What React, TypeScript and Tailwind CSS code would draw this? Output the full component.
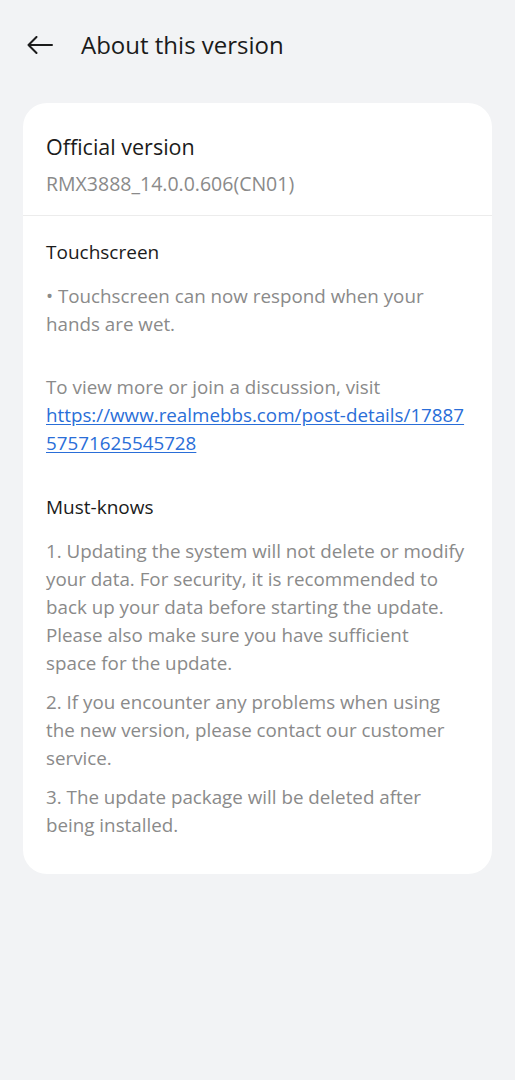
const mustKnows = [
  <>
    1. Updating the system will not delete or modify your data. For security, it is recommended to back up your
    data before starting the update. Please also make sure you have sufficient
    <br />
    space for the update.
  </>,
  '2. If you encounter any problems when using the new version, please contact our customer service.',
  '3. The update package will be deleted after being installed.',
]

function BackArrow() {
  return (
    <svg width="26" height="18" viewBox="0 0 26 18" fill="none" stroke="#1b1b1b" strokeWidth="2" strokeLinecap="round" strokeLinejoin="round">
      <path d="M25 9H1.5M9.5 1L1.5 9L9.5 17" />
    </svg>
  )
}

export default function App() {
  return (
    <div className="min-h-[1080px] w-full bg-[#f2f3f5] font-['Open_Sans',sans-serif]">
      {/* header */}
      <header className="flex h-[89px] items-center pl-[27px]">
        <BackArrow />
        <h1 className="ml-[28px] text-[24px] text-[#1b1b1b]">About this version</h1>
      </header>

      <main className="mx-[23px] mt-[14px] rounded-[24px] bg-white pb-[35px]">
        <div className="border-b border-[#ececec] px-[23px] pt-[28px] pb-[17px]">
          <p className="text-[21.5px] leading-[32px] text-[#1b1b1b]">Official version</p>
          <p className="mt-[7px] text-[19.5px] leading-[28px] text-[#8a8a8a]">RMX3888_14.0.0.606(CN01)</p>
        </div>

        <section className="px-[23px] pt-[21px]">
          <h2 className="text-[19px] leading-[30px] text-[#1b1b1b]">Touchscreen</h2>
          <div className="mt-[15px] text-[18.8px] leading-[28px] text-[#8a8a8a]">
            <p>• Touchscreen can now respond when your hands are wet.</p>
            <p className="mt-[35px]">To view more or join a discussion, visit</p>
            <a className="block break-all text-[#2a6ed8] underline underline-offset-2" href="#">
              https://www.realmebbs.com/post-details/1788757571625545728
            </a>
          </div>
        </section>

        <section className="px-[23px] pt-[35px]">
          <h2 className="text-[19px] leading-[30px] text-[#1b1b1b]">Must-knows</h2>
          <div className="mt-[15px] flex flex-col gap-[11px] text-[18.8px] leading-[28px] text-[#8a8a8a]">
            {mustKnows.map((t, i) => (
              <p key={i}>{t}</p>
            ))}
          </div>
        </section>
      </main>
    </div>
  )
}
